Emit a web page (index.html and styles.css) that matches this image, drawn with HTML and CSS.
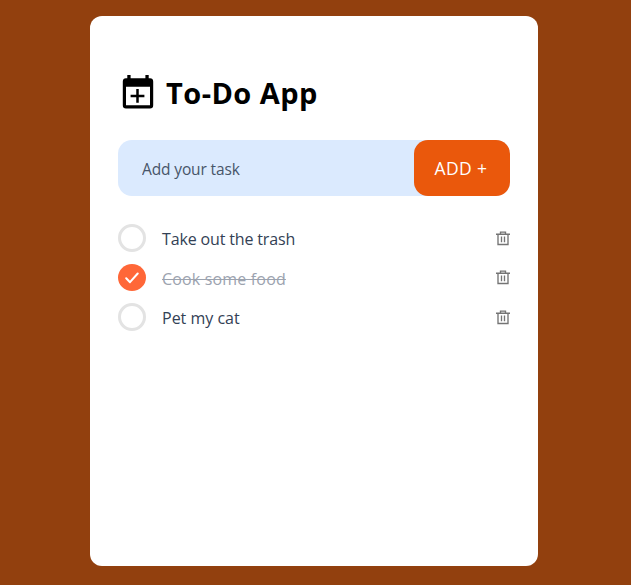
FILE: index.html
```html
<!DOCTYPE html>
<html lang="en">
<head>
<meta charset="utf-8">
<title>To-Do App</title>
<link rel="stylesheet" href="styles.css">
</head>
<body>
<svg class="sprite" aria-hidden="true">
  <symbol id="trash" viewBox="0 0 14 15">
    <path d="M0 3.200h14M4.500 2.800V1.100h5v1.700M2 3.200v10.300h10V3.200M5.500 5.500v5.800M8.500 5.500v5.800" fill="none" stroke="#747474" stroke-width="1.350"/>
  </symbol>
</svg>
<main class="card">
  <header class="header">
    <svg class="calendar" viewBox="0 0 32 34">
      <path fill-rule="evenodd" d="M5.300 0h3.300v3.300h14.800V0h3.300v3.300H28A3.300 3.300 0 0 1 31.200 6.600v23.600A3.300 3.300 0 0 1 28 33.500H4A3.300 3.300 0 0 1 .8 30.200V6.600A3.300 3.300 0 0 1 4 3.300h1.300zM4 11.700v18.500h24V11.700z"/>
      <path d="M15.500 14v13.800M8.600 20.900h13.800" stroke="#000" stroke-width="2.500"/>
    </svg>
    <h1 class="title">To-Do App</h1>
  </header>
  <form class="add">
    <input class="field" type="text" placeholder="Add your task">
    <button class="button" type="button">ADD +</button>
  </form>
  <ul class="list">
    <li class="item">
      <span class="check"></span>
      <span class="label label-long">Take out the trash</span>
      <svg class="trash"><use href="#trash"/></svg>
    </li>
    <li class="item">
      <span class="check done"><svg class="tick" viewBox="0 0 14 12"><path d="M1.200 6.300l3.800 3.900L12.700 1.500" fill="none" stroke="#fff" stroke-width="2" stroke-linecap="round" stroke-linejoin="round"/></svg></span>
      <span class="label label-done">Cook some food</span>
      <svg class="trash"><use href="#trash"/></svg>
    </li>
    <li class="item">
      <span class="check"></span>
      <span class="label">Pet my cat</span>
      <svg class="trash"><use href="#trash"/></svg>
    </li>
  </ul>
</main>
</body>
</html>
```

FILE: styles.css
```css
* { box-sizing: border-box; }
body {
  margin: 0;
  height: 585px;
  padding: 16px 0 0 90px;
  background: #92400e;
  font-family: "Open Sans", "Noto Sans", sans-serif;
  overflow: hidden;
}
.sprite { display: none; }
.card {
  width: 448px;
  height: 550px;
  padding: 56px 28px 0;
  background: #fff;
  border-radius: 12px;
}
.header { display: flex; align-items: center; height: 40px; padding-left: 4px; }
.calendar { width: 32px; height: 34px; }
.title {
  margin: 2px 0 0 12px;
  font-size: 29px;
  font-weight: 700;
  line-height: 38px;
  letter-spacing: 0.450px;
  white-space: nowrap;
}
.add {
  display: flex;
  height: 56px;
  margin-top: 28px;
  background: #dbeafe;
  border-radius: 14px;
}
.field {
  flex: 1;
  min-width: 0;
  padding: 1px 8px 0 24px;
  border: 0;
  outline: 0;
  background: transparent;
  font: 15.500px "Open Sans", "Noto Sans", sans-serif;
  letter-spacing: -0.130px;
}
.field::placeholder { color: #475569; opacity: 1; }
.button {
  width: 96px;
  padding: 0 2px 0 0;
  border: 0;
  border-radius: 14px;
  background: #ea580c;
  color: #fff;
  font: 17.500px "Open Sans", "Noto Sans", sans-serif;
  letter-spacing: 0.400px;
}
.list {
  margin: 28px 0 0;
  padding: 0;
  list-style: none;
  display: grid;
  gap: 11.600px;
}
.item { display: flex; align-items: center; height: 28px; }
.check {
  display: flex;
  align-items: center;
  justify-content: center;
  width: 28px;
  height: 28px;
  border: 3px solid #e3e3e3;
  border-radius: 50%;
}
.done { height: 27px; border: 0; background: #ff6738; }
.tick { width: 14px; height: 12px; }
.label {
  flex: 1;
  margin-left: 16px;
  padding-top: 2px;
  color: #334155;
  font-size: 16px;
  line-height: 26px;
}
.label-long { letter-spacing: -0.150px; }
.label-done { color: #9ca3af; text-decoration: line-through; letter-spacing: 0.170px; }
.trash { width: 14px; height: 15px; }
```
